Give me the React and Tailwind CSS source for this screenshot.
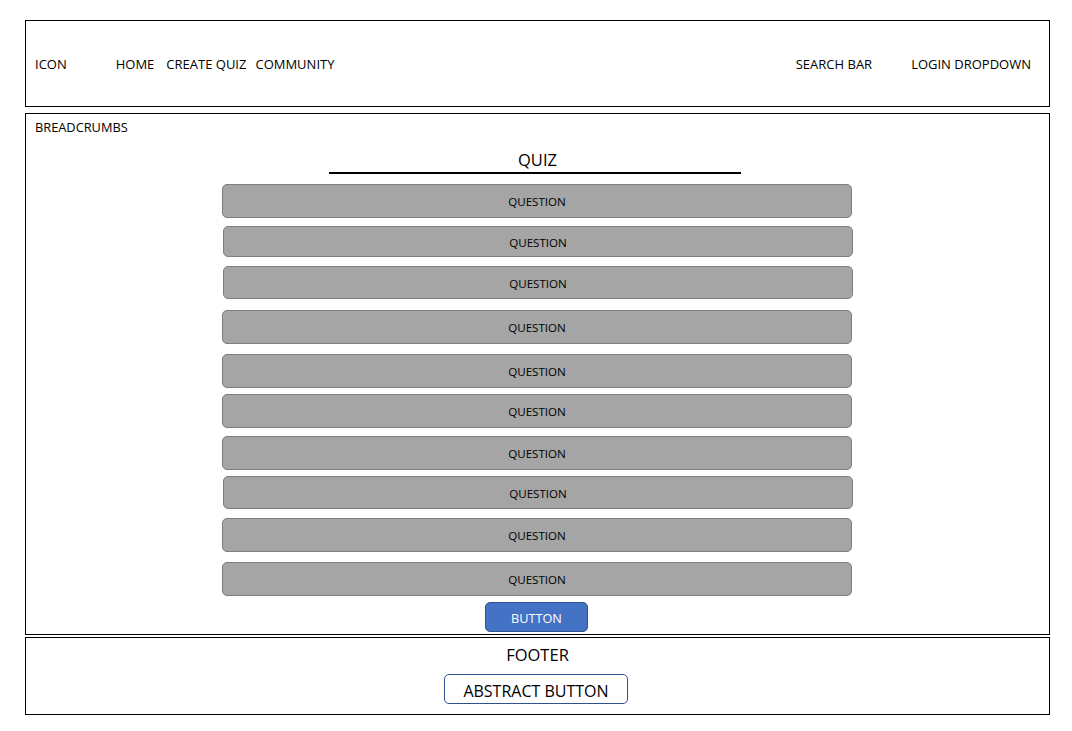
import React from 'react';

const questions = [
  { cls: 'mt-[10px] h-[34px] ml-[196px]' },
  { cls: 'mt-[8px] h-[31px] ml-[197px]' },
  { cls: 'mt-[9px] h-[33px] ml-[197px]' },
  { cls: 'mt-[11px] h-[34px] ml-[196px]' },
  { cls: 'mt-[10px] h-[34px] ml-[196px]' },
  { cls: 'mt-[6px] h-[34px] ml-[196px]' },
  { cls: 'mt-[8px] h-[34px] ml-[196px]' },
  { cls: 'mt-[6px] h-[33px] ml-[197px]' },
  { cls: 'mt-[9px] h-[34px] ml-[196px]' },
  { cls: 'mt-[10px] h-[34px] ml-[196px]' },
];

const App = () => {
  return (
    <div className="min-h-screen bg-white text-black font-['Open_Sans',sans-serif]">
      <div className="ml-[25px] pt-[20px] w-[1025px]">
        {/* header */}
        <header className="h-[87px] pt-[2px] border border-black flex items-center text-[13px]">
          <span className="ml-[9px]">ICON</span>
          <span className="ml-[49px]">HOME</span>
          <span className="ml-[12px]">CREATE QUIZ</span>
          <span className="ml-[9px]">COMMUNITY</span>
          <span className="ml-auto">SEARCH BAR</span>
          <span className="ml-[39px] mr-[18px]">LOGIN DROPDOWN</span>
        </header>

        {/* main */}
        <main className="mt-[6px] h-[522px] border border-black">
          <div className="pt-[5px] pl-[9px] text-[12.8px] leading-[16px]">BREADCRUMBS</div>
          <h1 className="mt-[14px] text-center text-[16.5px] leading-[22px]">QUIZ</h1>
          <div className="mt-[1px] ml-[303px] w-[412px] h-[2px] bg-black" />
          {questions.map((q, i) => (
            <div
              key={i}
              className={`${q.cls} w-[630px] pt-[2px] rounded-[5px] border border-[#7f7f7f] bg-[#a5a5a5] flex items-center justify-center text-[11.6px]`}
            >
              QUESTION
            </div>
          ))}
          <button className="mt-[6px] ml-[459px] w-[103px] h-[30px] pt-[3px] rounded-[5px] border border-[#2f528f] bg-[#4472c4] text-white text-[12.7px] flex items-center justify-center">
            BUTTON
          </button>
        </main>

        {/* footer */}
        <footer className="mt-[2px] h-[78px] border border-black">
          <div className="pt-[6px] text-center text-[16.5px] leading-[22px]">FOOTER</div>
          <button className="mt-[8px] ml-[418px] w-[184px] h-[30px] pt-[3px] rounded-[5px] border border-[#2f528f] bg-white text-[16px] flex items-center justify-center">
            ABSTRACT BUTTON
          </button>
        </footer>
      </div>
    </div>
  );
};

export default App;
